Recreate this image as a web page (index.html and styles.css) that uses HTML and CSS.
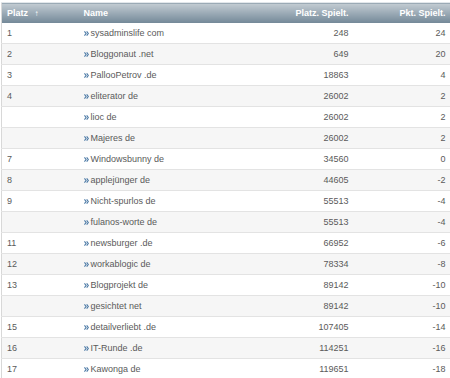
FILE: index.html
```html
<!doctype html>
<html>
<head>
  <title>Rangliste</title>
  <meta charset='UTF-8'>
  <link rel="stylesheet" href="styles.css">
</head>
<body>
  <svg width="0" height="0" style="position:absolute">
    <symbol id="go" viewBox="0 0 6 6"><path d="M0.5 0.5 L2.5 3 L0.5 5.5 M3.2 0.5 L5.2 3 L3.2 5.5" fill="none" stroke="#4c7aa6" stroke-width="1.4"/></symbol>
  </svg>
  <main class="ranking">
    <table>
      <colgroup>
        <col class="c-pos"><col class="c-name"><col class="c-games"><col class="c-points">
      </colgroup>
      <thead>
        <tr>
          <th>Platz <span class="sort">&#8593;</span></th>
          <th class="name">Name</th>
          <th class="num">Platz. Spielt.</th>
          <th class="num">Pkt. Spielt.</th>
        </tr>
      </thead>
      <tbody>
        <tr><td>1</td><td class="name"><svg class="go"><use href="#go"/></svg>sysadminslife com</td><td class="num">248</td><td class="num">24</td></tr>
        <tr><td>2</td><td class="name"><svg class="go"><use href="#go"/></svg>Bloggonaut .net</td><td class="num">649</td><td class="num">20</td></tr>
        <tr><td>3</td><td class="name"><svg class="go"><use href="#go"/></svg>PallooPetrov .de</td><td class="num">18863</td><td class="num">4</td></tr>
        <tr><td>4</td><td class="name"><svg class="go"><use href="#go"/></svg>eliterator de</td><td class="num">26002</td><td class="num">2</td></tr>
        <tr><td></td><td class="name"><svg class="go"><use href="#go"/></svg>lioc de</td><td class="num">26002</td><td class="num">2</td></tr>
        <tr><td></td><td class="name"><svg class="go"><use href="#go"/></svg>Majeres de</td><td class="num">26002</td><td class="num">2</td></tr>
        <tr><td>7</td><td class="name"><svg class="go"><use href="#go"/></svg>Windowsbunny de</td><td class="num">34560</td><td class="num">0</td></tr>
        <tr><td>8</td><td class="name"><svg class="go"><use href="#go"/></svg>applejünger de</td><td class="num">44605</td><td class="num">-2</td></tr>
        <tr><td>9</td><td class="name"><svg class="go"><use href="#go"/></svg>Nicht-spurlos de</td><td class="num">55513</td><td class="num">-4</td></tr>
        <tr><td></td><td class="name"><svg class="go"><use href="#go"/></svg>fulanos-worte de</td><td class="num">55513</td><td class="num">-4</td></tr>
        <tr><td>11</td><td class="name"><svg class="go"><use href="#go"/></svg>newsburger .de</td><td class="num">66952</td><td class="num">-6</td></tr>
        <tr><td>12</td><td class="name"><svg class="go"><use href="#go"/></svg>workablogic de</td><td class="num">78334</td><td class="num">-8</td></tr>
        <tr><td>13</td><td class="name"><svg class="go"><use href="#go"/></svg>Blogprojekt de</td><td class="num">89142</td><td class="num">-10</td></tr>
        <tr><td></td><td class="name"><svg class="go"><use href="#go"/></svg>gesichtet net</td><td class="num">89142</td><td class="num">-10</td></tr>
        <tr><td>15</td><td class="name"><svg class="go"><use href="#go"/></svg>detailverliebt .de</td><td class="num">107405</td><td class="num">-14</td></tr>
        <tr><td>16</td><td class="name"><svg class="go"><use href="#go"/></svg>IT-Runde .de</td><td class="num">114251</td><td class="num">-16</td></tr>
        <tr><td>17</td><td class="name"><svg class="go"><use href="#go"/></svg>Kawonga de</td><td class="num">119651</td><td class="num">-18</td></tr>
      </tbody>
    </table>
  </main>
</body>
</html>
```

FILE: styles.css
```css
html, body { background: #fff }
body {
  margin: 0;
  font: 9px 'Liberation Sans', Arial, sans-serif;
  color: #5a5a5a }
.ranking { padding: 2px 1px 0 1px }
  table {
    width: 448px;
    border-collapse: collapse;
    table-layout: fixed;
    border-left: 1px solid #d8d8d8 }
    .c-pos { width: 77px }
    .c-name { width: 176px }
    .c-games { width: 98px }
    .c-points { width: 97px }
  th {
    height: 20px;
    padding: 0 5px;
    text-align: left;
    font-weight: bold;
    color: #fff;
    white-space: nowrap;
    background: linear-gradient(#c3ccd3, #9eadb8 45%, #728797);
    border-top: 1px solid #e2e7eb }
    .sort { font-size: 8px; margin-left: 4px }
  td {
    height: 20px;
    padding: 0 5px;
    border-bottom: 1px solid #e3e3e3 }
    tbody tr:nth-child(even) td { background: #f6f6f6 }
  .num { text-align: right; padding-right: 4px }
  .go {
    width: 5px;
    height: 5px;
    margin-right: 2px;
    vertical-align: 0 }
```
